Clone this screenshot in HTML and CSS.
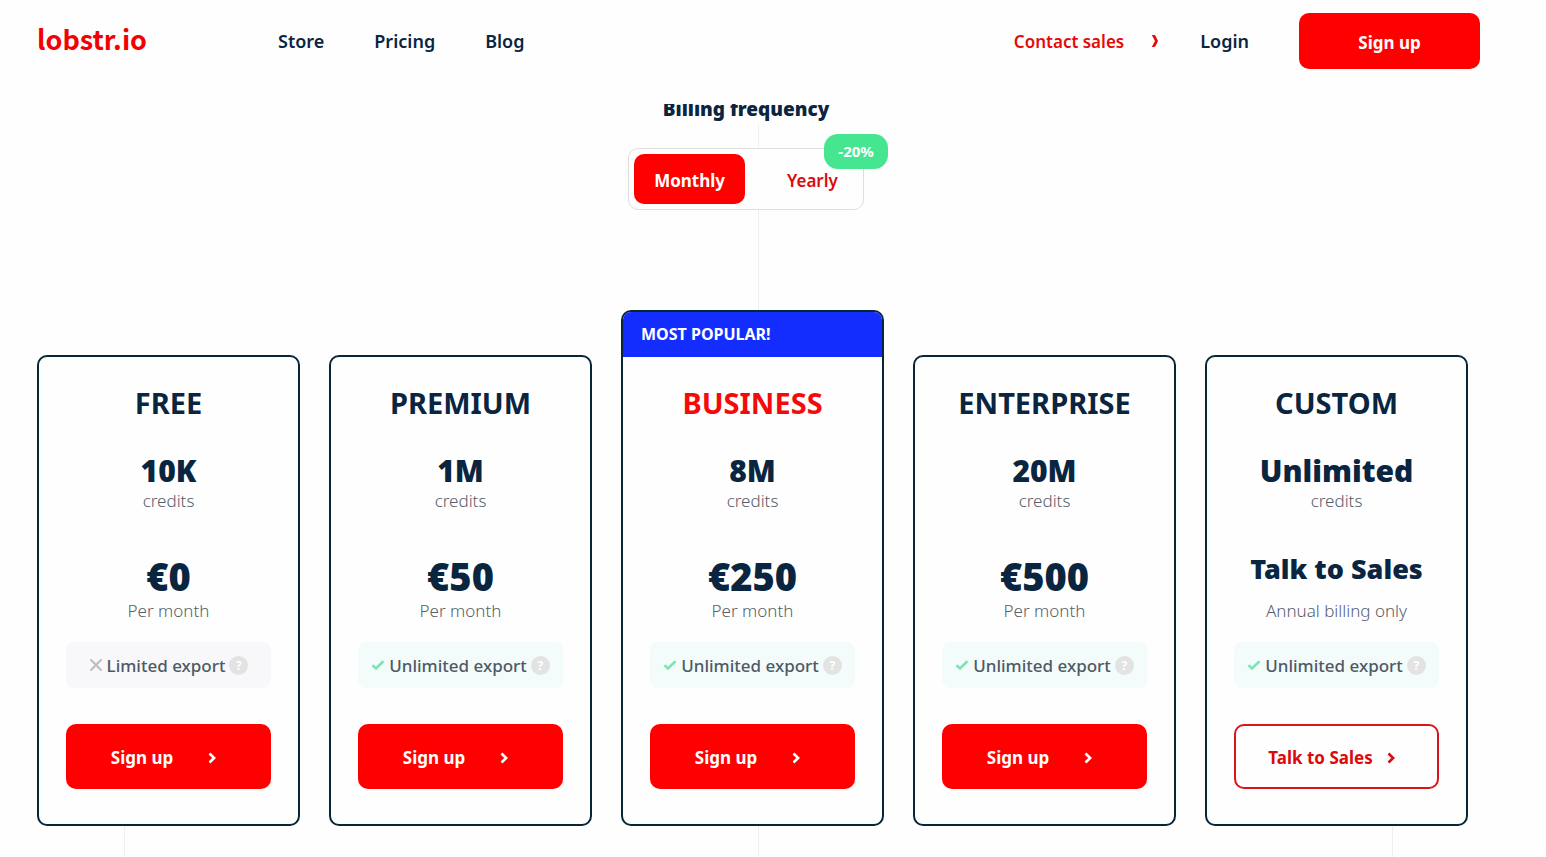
FILE: index.html
```html
<!DOCTYPE html>
<html lang="en">
<head>
    <meta charset="UTF-8">
    <meta name="viewport" content="width=device-width, initial-scale=1.0">
    <title>Pricing - lobstr.io</title>
    <link rel="stylesheet" href="styles.css">
</head>
<body>

    <!-- Shared icons -->
    <svg class="sprite" aria-hidden="true">
        <symbol id="chevron" viewBox="0 0 8 12">
            <path d="M1.5 1.5 L6.2 6 L1.5 10.5" fill="none" stroke="currentColor" stroke-width="2.6"/>
        </symbol>
        <symbol id="chevron-tall" viewBox="0 0 8 14">
            <path d="M0.8 1 H3.2 Q4.2 1 4.8 2.4 L7 7 L4.8 11.6 Q4.2 13 3.2 13 H0.8 L4 7 Z" fill="currentColor"/>
        </symbol>
        <symbol id="check" viewBox="0 0 14 14">
            <path d="M1.5 7.2 L5 10.4 L12.5 3.2" fill="none" stroke="currentColor" stroke-width="2.6"/>
        </symbol>
        <symbol id="cross" viewBox="0 0 14 14">
            <path d="M1.5 1.5 L12.5 12.5 M12.5 1.5 L1.5 12.5" fill="none" stroke="currentColor" stroke-width="2"/>
        </symbol>
    </svg>

    <header class="header">
        <a href="#" class="logo">lobstr.io</a>
        <nav class="nav">
            <a href="#">Store</a>
            <a href="#">Pricing</a>
            <a href="#">Blog</a>
        </nav>
        <div class="header-actions">
            <a href="#" class="contact">Contact sales <svg class="chevron-tall"><use href="#chevron-tall"/></svg></a>
            <a href="#" class="login">Login</a>
            <a href="#" class="btn header-btn">Sign up</a>
        </div>
    </header>

    <main class="page">
        <section class="billing">
            <h2>Billing frequency</h2>
            <div class="toggle">
                <button type="button" class="active" aria-pressed="true">Monthly</button>
                <button type="button" aria-pressed="false">Yearly</button>
                <span class="discount">-20%</span>
            </div>
        </section>

        <section class="plans">
            <article class="plan">
                <div class="plan-body">
                    <h3>FREE</h3>
                    <p class="credits">10K</p>
                    <p class="note">credits</p>
                    <p class="price">€0</p>
                    <p class="note">Per month</p>
                    <div class="export limited">
                        <svg><use href="#cross"/></svg>
                        <span>Limited export</span>
                        <button type="button" class="help">?</button>
                    </div>
                    <a href="#" class="btn">Sign up <svg class="chevron"><use href="#chevron"/></svg></a>
                </div>
            </article>

            <article class="plan">
                <div class="plan-body">
                    <h3>PREMIUM</h3>
                    <p class="credits">1M</p>
                    <p class="note">credits</p>
                    <p class="price">€50</p>
                    <p class="note">Per month</p>
                    <div class="export">
                        <svg><use href="#check"/></svg>
                        <span>Unlimited export</span>
                        <button type="button" class="help">?</button>
                    </div>
                    <a href="#" class="btn">Sign up <svg class="chevron"><use href="#chevron"/></svg></a>
                </div>
            </article>

            <article class="plan popular">
                <div class="banner">MOST POPULAR!</div>
                <div class="plan-body">
                    <h3>BUSINESS</h3>
                    <p class="credits">8M</p>
                    <p class="note">credits</p>
                    <p class="price">€250</p>
                    <p class="note">Per month</p>
                    <div class="export">
                        <svg><use href="#check"/></svg>
                        <span>Unlimited export</span>
                        <button type="button" class="help">?</button>
                    </div>
                    <a href="#" class="btn">Sign up <svg class="chevron"><use href="#chevron"/></svg></a>
                </div>
            </article>

            <article class="plan">
                <div class="plan-body">
                    <h3>ENTERPRISE</h3>
                    <p class="credits">20M</p>
                    <p class="note">credits</p>
                    <p class="price">€500</p>
                    <p class="note">Per month</p>
                    <div class="export">
                        <svg><use href="#check"/></svg>
                        <span>Unlimited export</span>
                        <button type="button" class="help">?</button>
                    </div>
                    <a href="#" class="btn">Sign up <svg class="chevron"><use href="#chevron"/></svg></a>
                </div>
            </article>

            <article class="plan">
                <div class="plan-body">
                    <h3>CUSTOM</h3>
                    <p class="credits">Unlimited</p>
                    <p class="note">credits</p>
                    <p class="price price-text">Talk to Sales</p>
                    <p class="note">Annual billing only</p>
                    <div class="export">
                        <svg><use href="#check"/></svg>
                        <span>Unlimited export</span>
                        <button type="button" class="help">?</button>
                    </div>
                    <a href="#" class="btn btn-outline">Talk to Sales <svg class="chevron"><use href="#chevron"/></svg></a>
                </div>
            </article>
        </section>

        <!-- Guide lines run on under the cards -->
        <div class="guides"></div>
    </main>

</body>
</html>
```

FILE: styles.css
```css
* {
    box-sizing: border-box;
}

body {
    margin: 0;
    font-family: "Noto Sans", "Open Sans", sans-serif;
    font-size: 17px;
    color: #0a2540;
    background-color: #fefefe;
    overflow: hidden;
}

h2, h3, p {
    margin: 0;
}

a {
    color: inherit;
    text-decoration: none;
}

button {
    font-family: inherit;
    border: none;
    cursor: pointer;
}

.sprite {
    display: none;
}

/* Header */
.header {
    position: fixed;
    top: 0;
    left: 0;
    right: 0;
    z-index: 10;
    display: flex;
    align-items: center;
    height: 104px;
    padding: 0 66px 22px 37px;
    background-color: #fefefe;
    font-weight: 600;
}

.logo {
    width: 241px;
    padding-bottom: 4px;
    font-family: "Noto Sans CJK SC", sans-serif;
    font-size: 27px;
    font-weight: 700;
    line-height: 40px;
    color: #f40000;
}

.nav {
    display: flex;
    gap: 50px;
    font-size: 18px;
}

.header-actions {
    display: flex;
    align-items: center;
    margin-left: auto;
}

.contact {
    display: flex;
    align-items: center;
    gap: 27px;
    margin-right: 41px;
    color: #e30b0b;
}

.chevron-tall {
    width: 8px;
    height: 14px;
}

.login {
    margin-right: 50px;
    font-size: 18px;
}

.btn {
    display: flex;
    align-items: center;
    justify-content: center;
    gap: 35px;
    height: 65px;
    padding: 2px 10px 0 0;
    border-radius: 10px;
    background-color: #ff0000;
    color: #fff;
    font-weight: 700;
}

.header-btn {
    width: 181px;
    height: 56px;
    padding-right: 0;
}

.btn-outline {
    gap: 14px;
    border: 2px solid #d9151c;
    background-color: #fefefe;
    color: #dc0a0a;
}

.chevron {
    width: 8px;
    height: 12px;
}

/* Page, with the vertical guide line in the middle */
.page {
    margin-right: 30px;
    padding-top: 94px;
    background: linear-gradient(#efefef, #efefef) center top / 1px 100% no-repeat;
}

.billing {
    display: flex;
    flex-direction: column;
    align-items: center;
    padding-right: 24px;
}

.billing h2 {
    margin-bottom: 24px;
    background-color: #fefefe;
    font-size: 19px;
    font-weight: 900;
    line-height: 30px;
}

.toggle {
    position: relative;
    display: flex;
    gap: 22px;
    padding: 5px;
    border: 1px solid #dedede;
    border-radius: 10px;
    background-color: #fefefe;
}

.toggle button {
    height: 50px;
    padding: 2px 20px 0;
    border-radius: 10px;
    background-color: transparent;
    color: #dc0a0a;
    font-size: 17px;
    font-weight: 600;
}

.toggle .active {
    background-color: #ff0000;
    color: #fff;
    font-weight: 700;
}

.discount {
    position: absolute;
    top: -15px;
    right: -25px;
    padding: 0 14px;
    border-radius: 14px;
    background-color: #46e58f;
    color: #fff;
    font-size: 15px;
    font-weight: 700;
    line-height: 35px;
}

/* Plans */
.plans {
    display: grid;
    grid-template-columns: repeat(5, 1fr);
    gap: 29px;
    align-items: end;
    padding: 100px 48px 0 37px;
}

.plan {
    overflow: hidden;
    border: 2px solid #0a2536;
    border-radius: 10px;
    background-color: #fefefe;
    text-align: center;
}

.banner {
    padding: 0 18px;
    background-color: #132dff;
    color: #fff;
    font-size: 16px;
    font-weight: 700;
    line-height: 45px;
    text-align: left;
}

.plan-body {
    padding: 27px 27px 35px;
}

.plan h3 {
    margin-bottom: 30px;
    font-size: 29px;
    font-weight: 700;
    line-height: 38px;
}

.popular h3 {
    color: #f40a0a;
}

.credits {
    font-size: 30px;
    font-weight: 900;
    line-height: 38px;
}

.note {
    color: #56606b;
    font-weight: 300;
    line-height: 22px;
}

.price {
    height: 56px;
    margin-top: 32px;
    font-size: 38px;
    font-weight: 900;
    line-height: 64px;
}

.price-text {
    font-size: 27px;
    line-height: 50px;
}

.export {
    display: flex;
    align-items: center;
    justify-content: center;
    gap: 4px;
    height: 46px;
    margin: 20px 0 36px;
    border-radius: 8px;
    background-color: #f3fcfa;
    color: #4d5a66;
    font-weight: 500;
    white-space: nowrap;
}

.export svg {
    width: 14px;
    height: 14px;
    color: #7fe3b4;
}

.limited {
    background-color: #f8f8fa;
}

.limited svg {
    color: #bdbdbd;
}

.help {
    width: 19px;
    height: 19px;
    padding: 0;
    border-radius: 50%;
    background-color: #e3e3e3;
    color: #fff;
    font-size: 12px;
    font-weight: 700;
    line-height: 19px;
}

.guides {
    height: 31px;
    margin: 0 123px 0 124px;
    border: solid #efefef;
    border-width: 0 1px;
}
```
